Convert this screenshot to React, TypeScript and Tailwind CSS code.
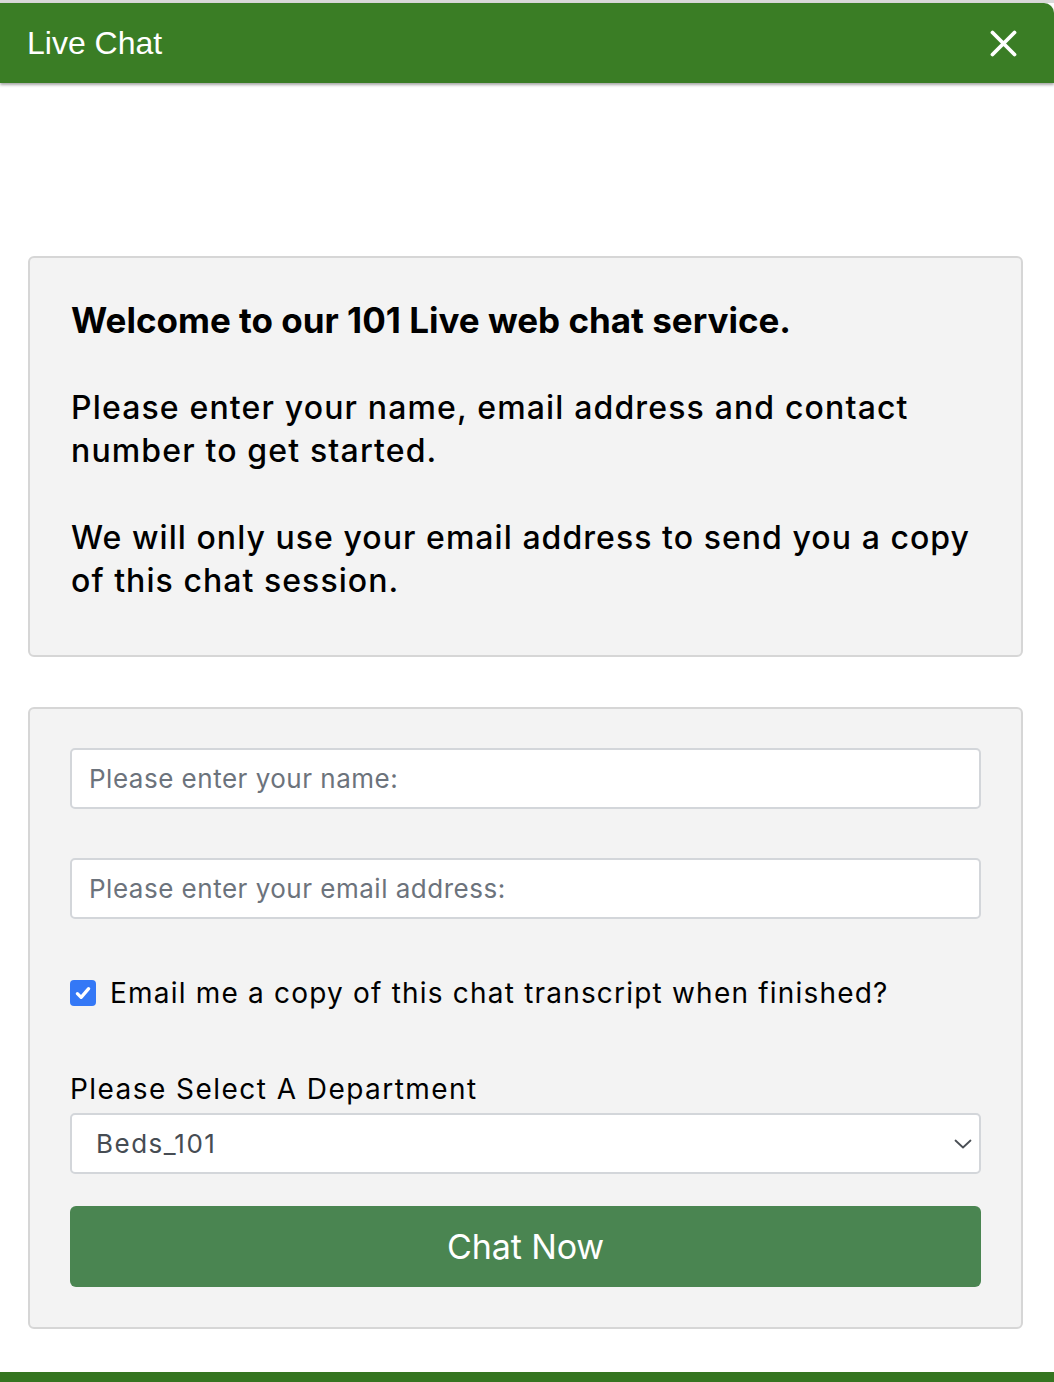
import { useState } from "react";

const sans = "font-['Inter','Noto_Sans',sans-serif]";

export default function App() {
  const [copy, setCopy] = useState(true);

  return (
    <div className="flex min-h-[1382px] w-[1054px] flex-col bg-white">
      {/* top strip */}
      <div className="h-[3px] bg-[#d9d9d9]" />

      {/* header */}
      <div className="flex h-[80px] items-center justify-between rounded-tr-[10px] bg-[#3a7d25] pl-[27px] pr-[37px] shadow-[0_2px_3px_rgba(0,0,0,0.35)]">
        <span className="font-['Liberation_Sans',Arial,sans-serif] text-[32px] leading-none text-white">Live Chat</span>
        <svg viewBox="0 0 27 27" className="h-[27px] w-[27px]" fill="none" stroke="white" strokeWidth={3.8} strokeLinecap="round">
          <path d="M2.5 2.5l22 22M24.5 2.5l-22 22" />
        </svg>
      </div>

      <div className={`flex flex-col pl-[28px] pr-[31px] pt-[173px] ${sans}`}>
        {/* intro box */}
        <div className="rounded-[6px] border-2 border-[#d6d6d6] bg-[#f3f3f3] pb-[53px] pl-[41px] pr-[36px] pt-[41px] leading-[43px] text-black">
          <p className="text-[35px] font-bold">Welcome to our 101 Live web chat service.</p>
          <p className="mt-[44px] text-[32px] font-medium tracking-[1.15px]">
            Please enter your name, email address and contact number to get started.
          </p>
          <p className="mt-[44px] text-[32px] font-medium tracking-[1.05px]">
            We will only use your email address to send you a copy of this chat session.
          </p>
        </div>

        {/* form box */}
        <div className="mt-[50px] flex flex-col rounded-[6px] border-2 border-[#d6d6d6] bg-[#f3f3f3] px-[40px] pb-[40px] pt-[39px]">
          <input
            type="text"
            placeholder="Please enter your name:"
            className="h-[61px] w-full rounded-[5px] border-2 border-[#d3d6da] bg-white px-[17px] text-[26px] tracking-[0.5px] text-black outline-none placeholder:text-[#6c737c]"
          />
          <input
            type="email"
            placeholder="Please enter your email address:"
            className="mt-[49px] h-[61px] w-full rounded-[5px] border-2 border-[#d3d6da] bg-white px-[17px] text-[26px] tracking-[0.5px] text-black outline-none placeholder:text-[#6c737c]"
          />

          <label className="mt-[56px] flex cursor-pointer items-center gap-[14px] text-[28px] leading-[36px] tracking-[1.2px] text-black">
            <input type="checkbox" checked={copy} onChange={() => setCopy(!copy)} className="hidden" />
            <span className={`flex h-[26px] w-[26px] items-center justify-center rounded-[4px] ${copy ? "bg-[#3478f6]" : "border-2 border-[#9a9a9a] bg-white"}`}>
              {copy && (
                <svg viewBox="0 0 16 16" className="h-[20px] w-[20px]" fill="none" stroke="white" strokeWidth={2.6} strokeLinecap="round" strokeLinejoin="round">
                  <path d="M3.5 8.5l3 3 6-7" />
                </svg>
              )}
            </span>
            Email me a copy of this chat transcript when finished?
          </label>

          <div className="mt-[60px] text-[28px] leading-[36px] tracking-[1.45px] text-black">Please Select A Department</div>
          <div className="mt-[6px] flex h-[61px] w-full items-center justify-between rounded-[5px] border-2 border-[#d3d6da] bg-white pl-[24px] pr-[7px] text-[26px] tracking-[1.5px] text-[#464c53]">
            <span>Beds_101</span>
            <svg viewBox="0 0 18 10" className="h-[10px] w-[18px]" fill="none" stroke="#4a4f55" strokeWidth={1.8} strokeLinecap="round" strokeLinejoin="round">
              <path d="M1.5 1.5L9 8.5l7.5-7" />
            </svg>
          </div>

          <button className="mt-[32px] h-[81px] w-full rounded-[6px] bg-[#4a8551] text-[34px] tracking-[-0.1px] text-white">
            Chat Now
          </button>
        </div>
      </div>

      <div className="flex-1" />
      <div className="h-[10px] bg-[#357520]" />
    </div>
  );
}
